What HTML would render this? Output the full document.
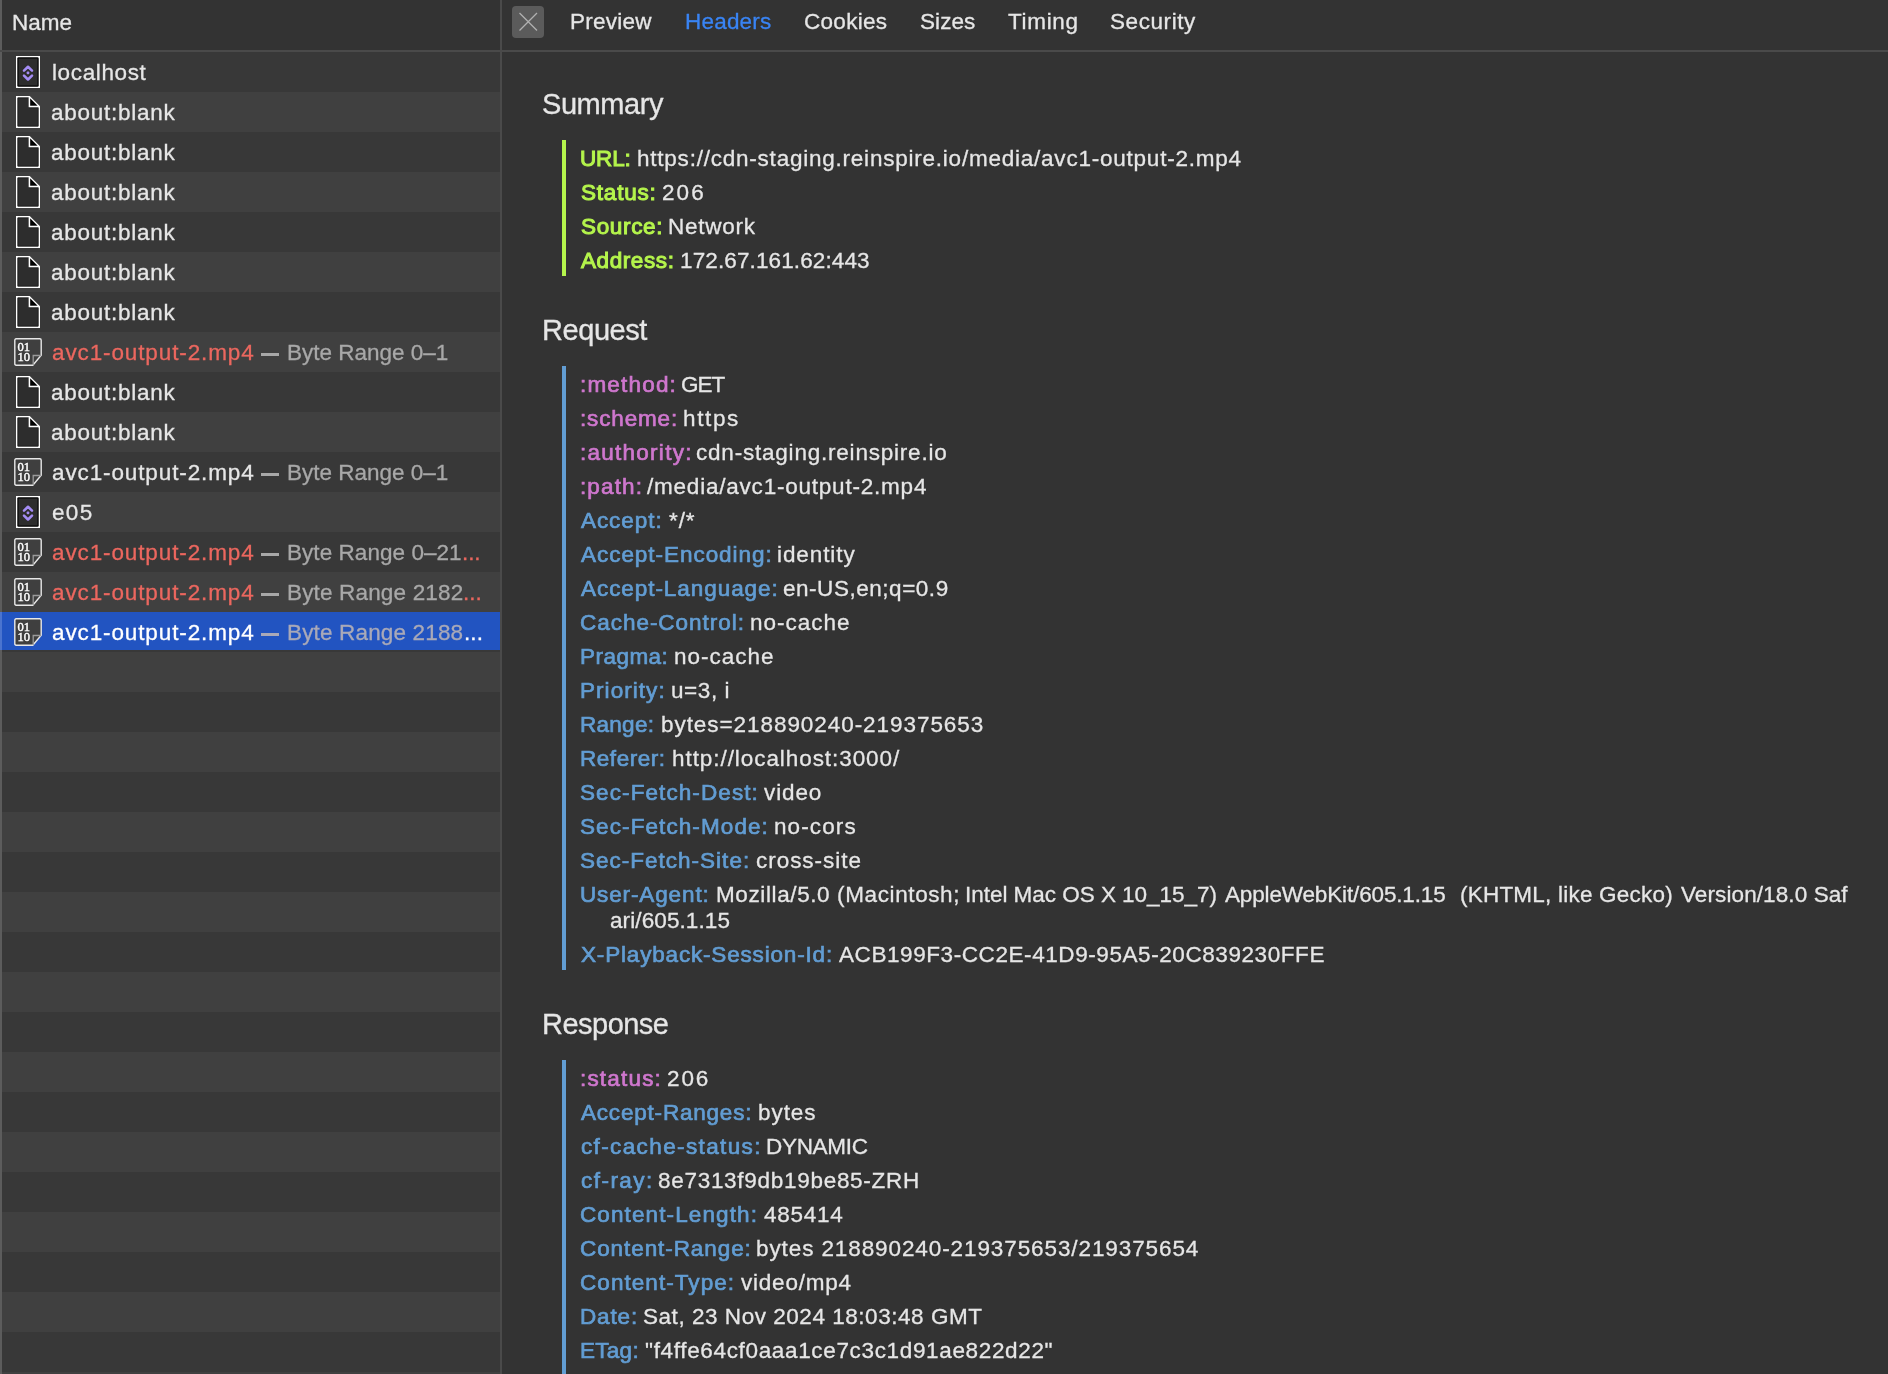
<!DOCTYPE html>
<html><head><meta charset="utf-8"><style>
*{margin:0;padding:0;box-sizing:border-box}
html,body{width:1888px;height:1374px;overflow:hidden;background:#333333;font-family:"Liberation Sans",sans-serif}
.row{position:absolute;left:0;width:500px;height:40px}
.even{background:#383838}
.odd{background:#404040}
.sel{background:#2254c1;height:38px}
#edge{position:absolute;left:0;top:0;width:2px;height:1374px;background:#5c5c5c}
#edgesel{position:absolute;left:0;top:612px;width:2px;height:38px;background:#4b74cf}
#hb{position:absolute;left:0;top:0;width:500px;height:50px;background:#333333}
#lborder{position:absolute;left:0;top:50px;width:1888px;height:2px;background:#4a4a4a}
#divider{position:absolute;left:500px;top:0;width:2px;height:1374px;background:#4a4a4a}
#close{position:absolute;left:512px;top:6px;width:32px;height:32px;border-radius:4px;background:#5b5b5b}
#close svg{position:absolute;left:0;top:0}
.ic{position:absolute;line-height:0;will-change:transform}
.bar{position:absolute;left:562px;width:4px}
.t{position:absolute;white-space:pre;font-family:"Liberation Sans",sans-serif;will-change:transform}
</style></head><body>
<div id="hb"></div>
<div class="row even" style="top:52px"></div><div class="row odd" style="top:92px"></div><div class="row even" style="top:132px"></div><div class="row odd" style="top:172px"></div><div class="row even" style="top:212px"></div><div class="row odd" style="top:252px"></div><div class="row even" style="top:292px"></div><div class="row odd" style="top:332px"></div><div class="row even" style="top:372px"></div><div class="row odd" style="top:412px"></div><div class="row even" style="top:452px"></div><div class="row odd" style="top:492px"></div><div class="row even" style="top:532px"></div><div class="row odd" style="top:572px"></div><div class="row even" style="top:612px"></div><div class="row odd" style="top:652px"></div><div class="row even" style="top:692px"></div><div class="row odd" style="top:732px"></div><div class="row even" style="top:772px"></div><div class="row odd" style="top:812px"></div><div class="row even" style="top:852px"></div><div class="row odd" style="top:892px"></div><div class="row even" style="top:932px"></div><div class="row odd" style="top:972px"></div><div class="row even" style="top:1012px"></div><div class="row odd" style="top:1052px"></div><div class="row even" style="top:1092px"></div><div class="row odd" style="top:1132px"></div><div class="row even" style="top:1172px"></div><div class="row odd" style="top:1212px"></div><div class="row even" style="top:1252px"></div><div class="row odd" style="top:1292px"></div><div class="row even" style="top:1332px"></div><div class="row odd" style="top:1372px"></div><div class="row sel" style="top:612px"></div>
<div id="edge"></div>
<div id="edgesel"></div>
<div id="lborder"></div>
<div id="divider"></div>
<div id="close"><svg width="32" height="32" viewBox="0 0 32 32"><path d="M7.5 7L25 24.5M25 7L7.5 24.5" stroke="#b0b0b0" stroke-width="1.3"/></svg></div>
<div class="ic" style="left:16px;top:56px"><svg width="24" height="32" viewBox="0 0 24 32"><rect x="0" y="0" width="24" height="32" fill="#fff"/><rect x="1.3" y="1.3" width="21.4" height="29.4" rx="1.3" fill="#000"/><rect x="2.5" y="2.5" width="19" height="27" fill="#2d2d2d"/><path d="M8 14.6L12 10.8L16 14.6" fill="none" stroke="#a48cf5" stroke-width="2.6" stroke-linecap="round" stroke-linejoin="round"/><path d="M8 19.6L12 23.5L16 19.6" fill="none" stroke="#a48cf5" stroke-width="2.6" stroke-linecap="round" stroke-linejoin="round"/><rect x="10.7" y="15.6" width="2.6" height="2.6" rx="0.6" fill="#a48cf5"/></svg></div><div class="ic" style="left:16px;top:96px"><svg width="24" height="32" viewBox="0 0 24 32"><path d="M0.75 0.75H13.4L23.25 10.6V31.25H0.75Z" fill="#2d2d2d" stroke="#fff" stroke-width="1.5"/><path d="M2 2H13V12H22V30H2Z" fill="none" stroke="#1e1e1e" stroke-width="0.8"/><path d="M14.2 2.4L21.6 9.8H14.2Z" fill="#000"/><path d="M13.4 0.75V10.6H23.25" fill="none" stroke="#fff" stroke-width="1.5"/></svg></div><div class="ic" style="left:16px;top:136px"><svg width="24" height="32" viewBox="0 0 24 32"><path d="M0.75 0.75H13.4L23.25 10.6V31.25H0.75Z" fill="#2d2d2d" stroke="#fff" stroke-width="1.5"/><path d="M2 2H13V12H22V30H2Z" fill="none" stroke="#1e1e1e" stroke-width="0.8"/><path d="M14.2 2.4L21.6 9.8H14.2Z" fill="#000"/><path d="M13.4 0.75V10.6H23.25" fill="none" stroke="#fff" stroke-width="1.5"/></svg></div><div class="ic" style="left:16px;top:176px"><svg width="24" height="32" viewBox="0 0 24 32"><path d="M0.75 0.75H13.4L23.25 10.6V31.25H0.75Z" fill="#2d2d2d" stroke="#fff" stroke-width="1.5"/><path d="M2 2H13V12H22V30H2Z" fill="none" stroke="#1e1e1e" stroke-width="0.8"/><path d="M14.2 2.4L21.6 9.8H14.2Z" fill="#000"/><path d="M13.4 0.75V10.6H23.25" fill="none" stroke="#fff" stroke-width="1.5"/></svg></div><div class="ic" style="left:16px;top:216px"><svg width="24" height="32" viewBox="0 0 24 32"><path d="M0.75 0.75H13.4L23.25 10.6V31.25H0.75Z" fill="#2d2d2d" stroke="#fff" stroke-width="1.5"/><path d="M2 2H13V12H22V30H2Z" fill="none" stroke="#1e1e1e" stroke-width="0.8"/><path d="M14.2 2.4L21.6 9.8H14.2Z" fill="#000"/><path d="M13.4 0.75V10.6H23.25" fill="none" stroke="#fff" stroke-width="1.5"/></svg></div><div class="ic" style="left:16px;top:256px"><svg width="24" height="32" viewBox="0 0 24 32"><path d="M0.75 0.75H13.4L23.25 10.6V31.25H0.75Z" fill="#2d2d2d" stroke="#fff" stroke-width="1.5"/><path d="M2 2H13V12H22V30H2Z" fill="none" stroke="#1e1e1e" stroke-width="0.8"/><path d="M14.2 2.4L21.6 9.8H14.2Z" fill="#000"/><path d="M13.4 0.75V10.6H23.25" fill="none" stroke="#fff" stroke-width="1.5"/></svg></div><div class="ic" style="left:16px;top:296px"><svg width="24" height="32" viewBox="0 0 24 32"><path d="M0.75 0.75H13.4L23.25 10.6V31.25H0.75Z" fill="#2d2d2d" stroke="#fff" stroke-width="1.5"/><path d="M2 2H13V12H22V30H2Z" fill="none" stroke="#1e1e1e" stroke-width="0.8"/><path d="M14.2 2.4L21.6 9.8H14.2Z" fill="#000"/><path d="M13.4 0.75V10.6H23.25" fill="none" stroke="#fff" stroke-width="1.5"/></svg></div><div class="ic" style="left:14px;top:338px"><svg width="28" height="28" viewBox="0 0 28 28"><path d="M2.2 0.8H25.8Q27.2 0.8 27.2 2.2V17.2L18.8 27.2H2.2Q0.8 27.2 0.8 25.8V2.2Q0.8 0.8 2.2 0.8Z" fill="#3f3f3f" stroke="#e8e8e8" stroke-width="1.4"/><path d="M19.2 27V17.5H27" fill="none" stroke="#9a9a9a" stroke-width="1.3"/><text x="3.6" y="13.1" font-family="Liberation Serif" font-size="12.6" fill="#fff" stroke="#fff" stroke-width="0.4" letter-spacing="-0.1">01</text><text x="3.6" y="23.4" font-family="Liberation Serif" font-size="12.6" fill="#fff" stroke="#fff" stroke-width="0.4" letter-spacing="-0.1">10</text></svg></div><div class="ic" style="left:16px;top:376px"><svg width="24" height="32" viewBox="0 0 24 32"><path d="M0.75 0.75H13.4L23.25 10.6V31.25H0.75Z" fill="#2d2d2d" stroke="#fff" stroke-width="1.5"/><path d="M2 2H13V12H22V30H2Z" fill="none" stroke="#1e1e1e" stroke-width="0.8"/><path d="M14.2 2.4L21.6 9.8H14.2Z" fill="#000"/><path d="M13.4 0.75V10.6H23.25" fill="none" stroke="#fff" stroke-width="1.5"/></svg></div><div class="ic" style="left:16px;top:416px"><svg width="24" height="32" viewBox="0 0 24 32"><path d="M0.75 0.75H13.4L23.25 10.6V31.25H0.75Z" fill="#2d2d2d" stroke="#fff" stroke-width="1.5"/><path d="M2 2H13V12H22V30H2Z" fill="none" stroke="#1e1e1e" stroke-width="0.8"/><path d="M14.2 2.4L21.6 9.8H14.2Z" fill="#000"/><path d="M13.4 0.75V10.6H23.25" fill="none" stroke="#fff" stroke-width="1.5"/></svg></div><div class="ic" style="left:14px;top:458px"><svg width="28" height="28" viewBox="0 0 28 28"><path d="M2.2 0.8H25.8Q27.2 0.8 27.2 2.2V17.2L18.8 27.2H2.2Q0.8 27.2 0.8 25.8V2.2Q0.8 0.8 2.2 0.8Z" fill="#3f3f3f" stroke="#e8e8e8" stroke-width="1.4"/><path d="M19.2 27V17.5H27" fill="none" stroke="#9a9a9a" stroke-width="1.3"/><text x="3.6" y="13.1" font-family="Liberation Serif" font-size="12.6" fill="#fff" stroke="#fff" stroke-width="0.4" letter-spacing="-0.1">01</text><text x="3.6" y="23.4" font-family="Liberation Serif" font-size="12.6" fill="#fff" stroke="#fff" stroke-width="0.4" letter-spacing="-0.1">10</text></svg></div><div class="ic" style="left:16px;top:496px"><svg width="24" height="32" viewBox="0 0 24 32"><rect x="0" y="0" width="24" height="32" fill="#fff"/><rect x="1.3" y="1.3" width="21.4" height="29.4" rx="1.3" fill="#000"/><rect x="2.5" y="2.5" width="19" height="27" fill="#2d2d2d"/><path d="M8 14.6L12 10.8L16 14.6" fill="none" stroke="#a48cf5" stroke-width="2.6" stroke-linecap="round" stroke-linejoin="round"/><path d="M8 19.6L12 23.5L16 19.6" fill="none" stroke="#a48cf5" stroke-width="2.6" stroke-linecap="round" stroke-linejoin="round"/><rect x="10.7" y="15.6" width="2.6" height="2.6" rx="0.6" fill="#a48cf5"/></svg></div><div class="ic" style="left:14px;top:538px"><svg width="28" height="28" viewBox="0 0 28 28"><path d="M2.2 0.8H25.8Q27.2 0.8 27.2 2.2V17.2L18.8 27.2H2.2Q0.8 27.2 0.8 25.8V2.2Q0.8 0.8 2.2 0.8Z" fill="#3f3f3f" stroke="#e8e8e8" stroke-width="1.4"/><path d="M19.2 27V17.5H27" fill="none" stroke="#9a9a9a" stroke-width="1.3"/><text x="3.6" y="13.1" font-family="Liberation Serif" font-size="12.6" fill="#fff" stroke="#fff" stroke-width="0.4" letter-spacing="-0.1">01</text><text x="3.6" y="23.4" font-family="Liberation Serif" font-size="12.6" fill="#fff" stroke="#fff" stroke-width="0.4" letter-spacing="-0.1">10</text></svg></div><div class="ic" style="left:14px;top:578px"><svg width="28" height="28" viewBox="0 0 28 28"><path d="M2.2 0.8H25.8Q27.2 0.8 27.2 2.2V17.2L18.8 27.2H2.2Q0.8 27.2 0.8 25.8V2.2Q0.8 0.8 2.2 0.8Z" fill="#3f3f3f" stroke="#e8e8e8" stroke-width="1.4"/><path d="M19.2 27V17.5H27" fill="none" stroke="#9a9a9a" stroke-width="1.3"/><text x="3.6" y="13.1" font-family="Liberation Serif" font-size="12.6" fill="#fff" stroke="#fff" stroke-width="0.4" letter-spacing="-0.1">01</text><text x="3.6" y="23.4" font-family="Liberation Serif" font-size="12.6" fill="#fff" stroke="#fff" stroke-width="0.4" letter-spacing="-0.1">10</text></svg></div><div class="ic" style="left:14px;top:618px"><svg width="28" height="28" viewBox="0 0 28 28"><path d="M2.2 0.8H25.8Q27.2 0.8 27.2 2.2V17.2L18.8 27.2H2.2Q0.8 27.2 0.8 25.8V2.2Q0.8 0.8 2.2 0.8Z" fill="#3f3f3f" stroke="#e8e8e8" stroke-width="1.4"/><path d="M19.2 27V17.5H27" fill="none" stroke="#9a9a9a" stroke-width="1.3"/><text x="3.6" y="13.1" font-family="Liberation Serif" font-size="12.6" fill="#fff" stroke="#fff" stroke-width="0.4" letter-spacing="-0.1">01</text><text x="3.6" y="23.4" font-family="Liberation Serif" font-size="12.6" fill="#fff" stroke="#fff" stroke-width="0.4" letter-spacing="-0.1">10</text></svg></div>
<div class="bar" style="top:140px;height:136px;background:#b5f54c"></div><div class="bar" style="top:366px;height:604px;background:#629dd3"></div><div class="bar" style="top:1060px;height:314px;background:#629dd3"></div>
<div class="t" style="left:12.20px;top:8.00px;font-size:22.5px;line-height:30px;letter-spacing:0.033px;color:#e6e6e6;-webkit-text-stroke-width:0.3px;">Name</div><div class="t" style="left:570.00px;top:7.00px;font-size:22.5px;line-height:30px;letter-spacing:0.250px;color:#e6e6e6;-webkit-text-stroke-width:0.3px;">Preview</div><div class="t" style="left:684.60px;top:7.00px;font-size:22.5px;line-height:30px;letter-spacing:0.200px;color:#3984f4;-webkit-text-stroke-width:0.3px;">Headers</div><div class="t" style="left:804.00px;top:7.00px;font-size:22.5px;line-height:30px;letter-spacing:0.300px;color:#e6e6e6;-webkit-text-stroke-width:0.3px;">Cookies</div><div class="t" style="left:919.60px;top:7.00px;font-size:22.5px;line-height:30px;letter-spacing:0.075px;color:#e6e6e6;-webkit-text-stroke-width:0.3px;">Sizes</div><div class="t" style="left:1008.20px;top:7.00px;font-size:22.5px;line-height:30px;letter-spacing:0.680px;color:#e6e6e6;-webkit-text-stroke-width:0.3px;">Timing</div><div class="t" style="left:1110.30px;top:7.00px;font-size:22.5px;line-height:30px;letter-spacing:0.571px;color:#e6e6e6;-webkit-text-stroke-width:0.3px;">Security</div><div class="t" style="left:542.10px;top:86.20px;font-size:29px;line-height:36px;letter-spacing:-0.433px;color:#e6e6e6;-webkit-text-stroke-width:0.3px;">Summary</div><div class="t" style="left:541.70px;top:312.00px;font-size:29px;line-height:36px;letter-spacing:-0.433px;color:#e6e6e6;-webkit-text-stroke-width:0.3px;">Request</div><div class="t" style="left:541.60px;top:1006.00px;font-size:29px;line-height:36px;letter-spacing:-0.514px;color:#e6e6e6;-webkit-text-stroke-width:0.3px;">Response</div><div class="t" style="left:580.00px;top:144.00px;font-size:22.5px;line-height:30px;letter-spacing:-0.133px;color:#b5f54c;-webkit-text-stroke-width:1px;">URL:</div><div class="t" style="left:637.30px;top:144.00px;font-size:22.5px;line-height:30px;letter-spacing:0.773px;color:#e6e6e6;-webkit-text-stroke-width:0.3px;">https://cdn-staging.reinspire.io/media/avc1-output-2.mp4</div><div class="t" style="left:581.00px;top:178.00px;font-size:22.5px;line-height:30px;letter-spacing:0.800px;color:#b5f54c;-webkit-text-stroke-width:1px;">Status:</div><div class="t" style="left:661.60px;top:178.00px;font-size:22.5px;line-height:30px;letter-spacing:2.100px;color:#e6e6e6;-webkit-text-stroke-width:0.3px;">206</div><div class="t" style="left:581.00px;top:212.00px;font-size:22.5px;line-height:30px;letter-spacing:0.650px;color:#b5f54c;-webkit-text-stroke-width:1px;">Source:</div><div class="t" style="left:667.80px;top:212.00px;font-size:22.5px;line-height:30px;letter-spacing:0.750px;color:#e6e6e6;-webkit-text-stroke-width:0.3px;">Network</div><div class="t" style="left:581.00px;top:246.00px;font-size:22.5px;line-height:30px;letter-spacing:0.586px;color:#b5f54c;-webkit-text-stroke-width:1px;">Address:</div><div class="t" style="left:680.00px;top:246.00px;font-size:22.5px;line-height:30px;letter-spacing:0.119px;color:#e6e6e6;-webkit-text-stroke-width:0.3px;">172.67.161.62:443</div><div class="t" style="left:580.00px;top:370.00px;font-size:22.5px;line-height:30px;letter-spacing:1.186px;color:#cf77ce;-webkit-text-stroke-width:0.7px;">:method:</div><div class="t" style="left:681.00px;top:370.00px;font-size:22.5px;line-height:30px;letter-spacing:-1.050px;color:#e6e6e6;-webkit-text-stroke-width:0.3px;">GET</div><div class="t" style="left:580.00px;top:404.00px;font-size:22.5px;line-height:30px;letter-spacing:0.843px;color:#cf77ce;-webkit-text-stroke-width:0.7px;">:scheme:</div><div class="t" style="left:682.90px;top:404.00px;font-size:22.5px;line-height:30px;letter-spacing:1.625px;color:#e6e6e6;-webkit-text-stroke-width:0.3px;">https</div><div class="t" style="left:580.00px;top:438.00px;font-size:22.5px;line-height:30px;letter-spacing:1.260px;color:#cf77ce;-webkit-text-stroke-width:0.7px;">:authority:</div><div class="t" style="left:696.10px;top:438.00px;font-size:22.5px;line-height:30px;letter-spacing:0.787px;color:#e6e6e6;-webkit-text-stroke-width:0.3px;">cdn-staging.reinspire.io</div><div class="t" style="left:580.00px;top:472.00px;font-size:22.5px;line-height:30px;letter-spacing:1.120px;color:#cf77ce;-webkit-text-stroke-width:0.7px;">:path:</div><div class="t" style="left:647.40px;top:472.00px;font-size:22.5px;line-height:30px;letter-spacing:0.783px;color:#e6e6e6;-webkit-text-stroke-width:0.3px;">/media/avc1-output-2.mp4</div><div class="t" style="left:581.00px;top:506.00px;font-size:22.5px;line-height:30px;letter-spacing:0.933px;color:#629dd3;-webkit-text-stroke-width:0.7px;">Accept:</div><div class="t" style="left:669.00px;top:506.00px;font-size:22.5px;line-height:30px;letter-spacing:0.900px;color:#e6e6e6;-webkit-text-stroke-width:0.3px;">*/*</div><div class="t" style="left:581.00px;top:540.00px;font-size:22.5px;line-height:30px;letter-spacing:0.960px;color:#629dd3;-webkit-text-stroke-width:0.7px;">Accept-Encoding:</div><div class="t" style="left:777.40px;top:540.00px;font-size:22.5px;line-height:30px;letter-spacing:0.914px;color:#e6e6e6;-webkit-text-stroke-width:0.3px;">identity</div><div class="t" style="left:581.00px;top:574.00px;font-size:22.5px;line-height:30px;letter-spacing:0.940px;color:#629dd3;-webkit-text-stroke-width:0.7px;">Accept-Language:</div><div class="t" style="left:783.10px;top:574.00px;font-size:22.5px;line-height:30px;letter-spacing:0.531px;color:#e6e6e6;-webkit-text-stroke-width:0.3px;">en-US,en;q=0.9</div><div class="t" style="left:580.00px;top:608.00px;font-size:22.5px;line-height:30px;letter-spacing:0.969px;color:#629dd3;-webkit-text-stroke-width:0.7px;">Cache-Control:</div><div class="t" style="left:750.00px;top:608.00px;font-size:22.5px;line-height:30px;letter-spacing:1.000px;color:#e6e6e6;-webkit-text-stroke-width:0.3px;">no-cache</div><div class="t" style="left:580.00px;top:642.00px;font-size:22.5px;line-height:30px;letter-spacing:0.467px;color:#629dd3;-webkit-text-stroke-width:0.7px;">Pragma:</div><div class="t" style="left:674.20px;top:642.00px;font-size:22.5px;line-height:30px;letter-spacing:0.986px;color:#e6e6e6;-webkit-text-stroke-width:0.3px;">no-cache</div><div class="t" style="left:580.00px;top:676.00px;font-size:22.5px;line-height:30px;letter-spacing:1.050px;color:#629dd3;-webkit-text-stroke-width:0.7px;">Priority:</div><div class="t" style="left:670.80px;top:676.00px;font-size:22.5px;line-height:30px;letter-spacing:0.580px;color:#e6e6e6;-webkit-text-stroke-width:0.3px;">u=3, i</div><div class="t" style="left:580.00px;top:710.00px;font-size:22.5px;line-height:30px;letter-spacing:0.280px;color:#629dd3;-webkit-text-stroke-width:0.7px;">Range:</div><div class="t" style="left:660.60px;top:710.00px;font-size:22.5px;line-height:30px;letter-spacing:0.942px;color:#e6e6e6;-webkit-text-stroke-width:0.3px;">bytes=218890240-219375653</div><div class="t" style="left:580.00px;top:744.00px;font-size:22.5px;line-height:30px;letter-spacing:0.543px;color:#629dd3;-webkit-text-stroke-width:0.7px;">Referer:</div><div class="t" style="left:671.50px;top:744.00px;font-size:22.5px;line-height:30px;letter-spacing:0.933px;color:#e6e6e6;-webkit-text-stroke-width:0.3px;">http://localhost:3000/</div><div class="t" style="left:580.00px;top:778.00px;font-size:22.5px;line-height:30px;letter-spacing:1.093px;color:#629dd3;-webkit-text-stroke-width:0.7px;">Sec-Fetch-Dest:</div><div class="t" style="left:764.00px;top:778.00px;font-size:22.5px;line-height:30px;letter-spacing:0.875px;color:#e6e6e6;-webkit-text-stroke-width:0.3px;">video</div><div class="t" style="left:580.00px;top:812.00px;font-size:22.5px;line-height:30px;letter-spacing:1.093px;color:#629dd3;-webkit-text-stroke-width:0.7px;">Sec-Fetch-Mode:</div><div class="t" style="left:773.50px;top:812.00px;font-size:22.5px;line-height:30px;letter-spacing:1.100px;color:#e6e6e6;-webkit-text-stroke-width:0.3px;">no-cors</div><div class="t" style="left:580.00px;top:846.00px;font-size:22.5px;line-height:30px;letter-spacing:1.007px;color:#629dd3;-webkit-text-stroke-width:0.7px;">Sec-Fetch-Site:</div><div class="t" style="left:755.70px;top:846.00px;font-size:22.5px;line-height:30px;letter-spacing:0.967px;color:#e6e6e6;-webkit-text-stroke-width:0.3px;">cross-site</div><div class="t" style="left:580.00px;top:880.00px;font-size:22.5px;line-height:30px;letter-spacing:0.870px;color:#629dd3;-webkit-text-stroke-width:0.7px;">User-Agent:</div><div class="t" style="left:716.00px;top:880.00px;font-size:22.5px;line-height:30px;letter-spacing:0.609px;color:#e6e6e6;-webkit-text-stroke-width:0.3px;">Mozilla/5.0 (Macintosh;</div><div class="t" style="left:964.50px;top:880.00px;font-size:22.5px;line-height:30px;letter-spacing:-0.032px;color:#e6e6e6;-webkit-text-stroke-width:0.3px;">Intel Mac OS X 10_15_7)</div><div class="t" style="left:1224.70px;top:880.00px;font-size:22.5px;line-height:30px;letter-spacing:-0.147px;color:#e6e6e6;-webkit-text-stroke-width:0.3px;">AppleWebKit/605.1.15</div><div class="t" style="left:1459.50px;top:880.00px;font-size:22.5px;line-height:30px;letter-spacing:0.217px;color:#e6e6e6;-webkit-text-stroke-width:0.3px;">(KHTML, like Gecko)</div><div class="t" style="left:1681.40px;top:880.00px;font-size:22.5px;line-height:30px;letter-spacing:0.100px;color:#e6e6e6;-webkit-text-stroke-width:0.3px;">Version/18.0 Saf</div><div class="t" style="left:609.80px;top:906.00px;font-size:22.5px;line-height:30px;letter-spacing:0.100px;color:#e6e6e6;-webkit-text-stroke-width:0.3px;">ari/605.1.15</div><div class="t" style="left:581.00px;top:940.00px;font-size:22.5px;line-height:30px;letter-spacing:0.824px;color:#629dd3;-webkit-text-stroke-width:0.7px;">X-Playback-Session-Id:</div><div class="t" style="left:839.00px;top:940.00px;font-size:22.5px;line-height:30px;letter-spacing:0.577px;color:#e6e6e6;-webkit-text-stroke-width:0.3px;">ACB199F3-CC2E-41D9-95A5-20C839230FFE</div><div class="t" style="left:580.00px;top:1064.00px;font-size:22.5px;line-height:30px;letter-spacing:1.186px;color:#cf77ce;-webkit-text-stroke-width:0.7px;">:status:</div><div class="t" style="left:666.50px;top:1064.00px;font-size:22.5px;line-height:30px;letter-spacing:1.900px;color:#e6e6e6;-webkit-text-stroke-width:0.3px;">206</div><div class="t" style="left:581.00px;top:1098.00px;font-size:22.5px;line-height:30px;letter-spacing:0.800px;color:#629dd3;-webkit-text-stroke-width:0.7px;">Accept-Ranges:</div><div class="t" style="left:757.60px;top:1098.00px;font-size:22.5px;line-height:30px;letter-spacing:0.950px;color:#e6e6e6;-webkit-text-stroke-width:0.3px;">bytes</div><div class="t" style="left:581.00px;top:1132.00px;font-size:22.5px;line-height:30px;letter-spacing:1.373px;color:#629dd3;-webkit-text-stroke-width:0.7px;">cf-cache-status:</div><div class="t" style="left:766.00px;top:1132.00px;font-size:22.5px;line-height:30px;letter-spacing:-0.300px;color:#e6e6e6;-webkit-text-stroke-width:0.3px;">DYNAMIC</div><div class="t" style="left:581.00px;top:1166.00px;font-size:22.5px;line-height:30px;letter-spacing:1.467px;color:#629dd3;-webkit-text-stroke-width:0.7px;">cf-ray:</div><div class="t" style="left:657.80px;top:1166.00px;font-size:22.5px;line-height:30px;letter-spacing:0.711px;color:#e6e6e6;-webkit-text-stroke-width:0.3px;">8e7313f9db19be85-ZRH</div><div class="t" style="left:580.00px;top:1200.00px;font-size:22.5px;line-height:30px;letter-spacing:1.114px;color:#629dd3;-webkit-text-stroke-width:0.7px;">Content-Length:</div><div class="t" style="left:764.00px;top:1200.00px;font-size:22.5px;line-height:30px;letter-spacing:0.720px;color:#e6e6e6;-webkit-text-stroke-width:0.3px;">485414</div><div class="t" style="left:580.00px;top:1234.00px;font-size:22.5px;line-height:30px;letter-spacing:0.923px;color:#629dd3;-webkit-text-stroke-width:0.7px;">Content-Range:</div><div class="t" style="left:756.10px;top:1234.00px;font-size:22.5px;line-height:30px;letter-spacing:0.903px;color:#e6e6e6;-webkit-text-stroke-width:0.3px;">bytes 218890240-219375653/219375654</div><div class="t" style="left:580.00px;top:1268.00px;font-size:22.5px;line-height:30px;letter-spacing:1.058px;color:#629dd3;-webkit-text-stroke-width:0.7px;">Content-Type:</div><div class="t" style="left:741.20px;top:1268.00px;font-size:22.5px;line-height:30px;letter-spacing:0.775px;color:#e6e6e6;-webkit-text-stroke-width:0.3px;">video/mp4</div><div class="t" style="left:580.00px;top:1302.00px;font-size:22.5px;line-height:30px;letter-spacing:0.850px;color:#629dd3;-webkit-text-stroke-width:0.7px;">Date:</div><div class="t" style="left:642.90px;top:1302.00px;font-size:22.5px;line-height:30px;letter-spacing:0.536px;color:#e6e6e6;-webkit-text-stroke-width:0.3px;">Sat, 23 Nov 2024 18:03:48 GMT</div><div class="t" style="left:580.00px;top:1336.00px;font-size:22.5px;line-height:30px;letter-spacing:0.275px;color:#629dd3;-webkit-text-stroke-width:0.7px;">ETag:</div><div class="t" style="left:645.30px;top:1336.00px;font-size:22.5px;line-height:30px;letter-spacing:0.658px;color:#e6e6e6;-webkit-text-stroke-width:0.3px;">&quot;f4ffe64cf0aaa1ce7c3c1d91ae822d22&quot;</div><div class="t" style="left:51.80px;top:58.00px;font-size:22.5px;line-height:30px;letter-spacing:0.625px;color:#e6e6e6;-webkit-text-stroke-width:0.3px;">localhost</div><div class="t" style="left:51.40px;top:98.00px;font-size:22.5px;line-height:30px;letter-spacing:0.730px;color:#e6e6e6;-webkit-text-stroke-width:0.3px;">about:blank</div><div class="t" style="left:51.40px;top:138.00px;font-size:22.5px;line-height:30px;letter-spacing:0.730px;color:#e6e6e6;-webkit-text-stroke-width:0.3px;">about:blank</div><div class="t" style="left:51.40px;top:178.00px;font-size:22.5px;line-height:30px;letter-spacing:0.730px;color:#e6e6e6;-webkit-text-stroke-width:0.3px;">about:blank</div><div class="t" style="left:51.40px;top:218.00px;font-size:22.5px;line-height:30px;letter-spacing:0.730px;color:#e6e6e6;-webkit-text-stroke-width:0.3px;">about:blank</div><div class="t" style="left:51.40px;top:258.00px;font-size:22.5px;line-height:30px;letter-spacing:0.730px;color:#e6e6e6;-webkit-text-stroke-width:0.3px;">about:blank</div><div class="t" style="left:51.40px;top:298.00px;font-size:22.5px;line-height:30px;letter-spacing:0.730px;color:#e6e6e6;-webkit-text-stroke-width:0.3px;">about:blank</div><div class="t" style="left:51.80px;top:338.00px;font-size:22.5px;line-height:30px;letter-spacing:0.881px;color:#ec675f;-webkit-text-stroke-width:0.3px;">avc1-output-2.mp4</div><div class="t" style="left:286.70px;top:338.00px;font-size:22.5px;line-height:30px;letter-spacing:-0.008px;color:#a8a8a8;-webkit-text-stroke-width:0.3px;">Byte Range 0–1</div><div class="t" style="left:51.40px;top:378.00px;font-size:22.5px;line-height:30px;letter-spacing:0.730px;color:#e6e6e6;-webkit-text-stroke-width:0.3px;">about:blank</div><div class="t" style="left:51.40px;top:418.00px;font-size:22.5px;line-height:30px;letter-spacing:0.730px;color:#e6e6e6;-webkit-text-stroke-width:0.3px;">about:blank</div><div class="t" style="left:51.80px;top:458.00px;font-size:22.5px;line-height:30px;letter-spacing:0.881px;color:#e6e6e6;-webkit-text-stroke-width:0.3px;">avc1-output-2.mp4</div><div class="t" style="left:286.70px;top:458.00px;font-size:22.5px;line-height:30px;letter-spacing:-0.008px;color:#a8a8a8;-webkit-text-stroke-width:0.3px;">Byte Range 0–1</div><div class="t" style="left:51.80px;top:498.00px;font-size:22.5px;line-height:30px;letter-spacing:1.350px;color:#e6e6e6;-webkit-text-stroke-width:0.3px;">e05</div><div class="t" style="left:51.80px;top:538.00px;font-size:22.5px;line-height:30px;letter-spacing:0.881px;color:#ec675f;-webkit-text-stroke-width:0.3px;">avc1-output-2.mp4</div><div class="t" style="left:286.70px;top:538.00px;font-size:22.5px;line-height:30px;letter-spacing:0.050px;color:#a8a8a8;-webkit-text-stroke-width:0.3px;">Byte Range 0–21</div><div class="t" style="left:462.40px;top:538.00px;font-size:22.5px;line-height:30px;letter-spacing:-0.100px;color:#ec675f;-webkit-text-stroke-width:0.3px;">...</div><div class="t" style="left:51.80px;top:578.00px;font-size:22.5px;line-height:30px;letter-spacing:0.881px;color:#ec675f;-webkit-text-stroke-width:0.3px;">avc1-output-2.mp4</div><div class="t" style="left:286.70px;top:578.00px;font-size:22.5px;line-height:30px;letter-spacing:0.164px;color:#a8a8a8;-webkit-text-stroke-width:0.3px;">Byte Range 2182</div><div class="t" style="left:462.90px;top:578.00px;font-size:22.5px;line-height:30px;letter-spacing:0.050px;color:#ec675f;-webkit-text-stroke-width:0.3px;">...</div><div class="t" style="left:51.80px;top:618.00px;font-size:22.5px;line-height:30px;letter-spacing:0.881px;color:#ffffff;-webkit-text-stroke-width:0.3px;">avc1-output-2.mp4</div><div class="t" style="left:286.70px;top:618.00px;font-size:22.5px;line-height:30px;letter-spacing:0.157px;color:#a9a9b8;-webkit-text-stroke-width:0.3px;">Byte Range 2188</div><div class="t" style="left:463.80px;top:618.00px;font-size:22.5px;line-height:30px;letter-spacing:0.100px;color:#ffffff;-webkit-text-stroke-width:0.3px;">...</div>
<div style="position:absolute;left:261.3px;top:353px;width:17.6px;height:2.5px;background:#a8a8a8"></div><div style="position:absolute;left:261.3px;top:473px;width:17.6px;height:2.5px;background:#a8a8a8"></div><div style="position:absolute;left:261.3px;top:553px;width:17.6px;height:2.5px;background:#a8a8a8"></div><div style="position:absolute;left:261.3px;top:593px;width:17.6px;height:2.5px;background:#a8a8a8"></div><div style="position:absolute;left:261.3px;top:633px;width:17.6px;height:2.5px;background:#a9a9b8"></div>
</body></html>
